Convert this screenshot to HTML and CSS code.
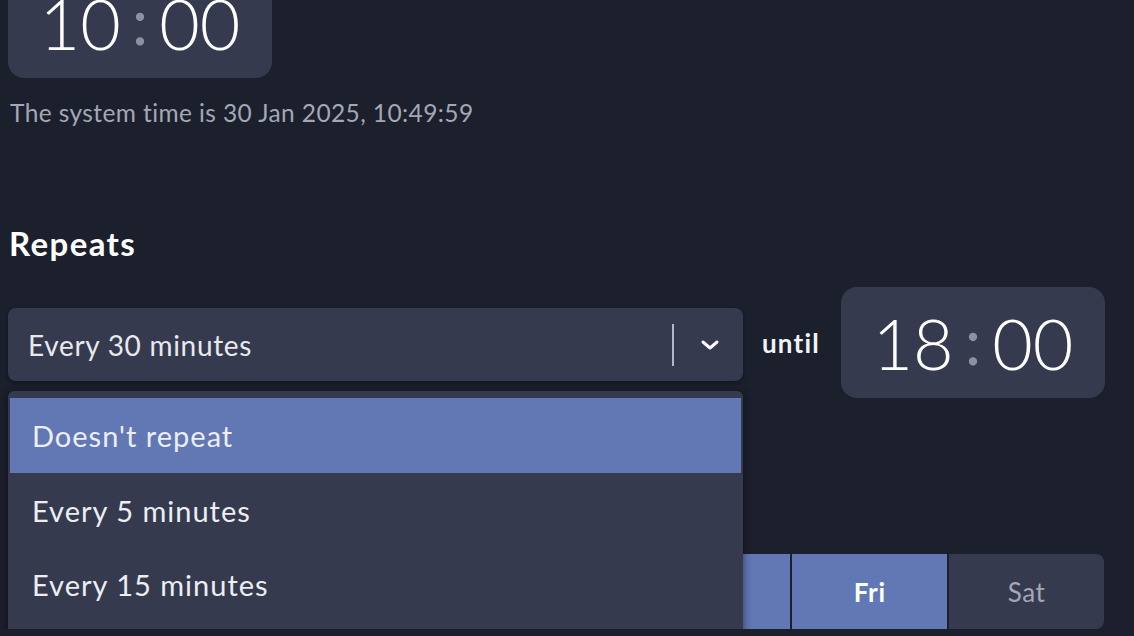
FILE: index.html
```html
<!DOCTYPE html>
<html lang="en">
<head>
    <meta charset="UTF-8">
    <meta name="viewport" content="width=device-width, initial-scale=1.0">
    <title>Schedule</title>
    <link rel="stylesheet" href="styles.css">
</head>
<body>
    <div class="page">
        <div class="time-box">
            <span class="digits">10</span><span class="colon">:</span><span class="digits">00</span>
        </div>
        <p class="system-time">The system time is 30 Jan 2025, 10:49:59</p>

        <h2 class="section-title">Repeats</h2>

        <div class="repeat-row">
            <div class="select-wrap">
                <div class="select">
                    <span class="select-value">Every 30 minutes</span>
                    <span class="select-sep"></span>
                    <svg class="chevron" width="22" height="14" viewBox="0 0 22 14">
                        <path d="M4 4 L11 10 L18 4" fill="none" stroke="#ffffff" stroke-width="3" stroke-linecap="round" stroke-linejoin="round"/>
                    </svg>
                </div>
                <ul class="menu">
                    <li class="menu-item active">Doesn't repeat</li>
                    <li class="menu-item">Every 5 minutes</li>
                    <li class="menu-item">Every 15 minutes</li>
                    <li class="menu-item">Every 30 minutes</li>
                </ul>
            </div>
            <span class="until">until</span>
            <div class="time-box">
                <span class="digits">18</span><span class="colon">:</span><span class="digits">00</span>
            </div>
        </div>

        <div class="days">
            <div class="day">Sun</div>
            <div class="day on">Mon</div>
            <div class="day on">Tue</div>
            <div class="day on">Wed</div>
            <div class="day on">Thu</div>
            <div class="day on">Fri</div>
            <div class="day">Sat</div>
        </div>
    </div>
</body>
</html>
```

FILE: styles.css
```css
body {
    margin: 0;
    padding: 0;
    background: #1c1f2c;
    color: #ffffff;
    font-family: 'Lato', 'Open Sans', sans-serif;
    overflow: hidden;
}

.page {
    display: flex;
    flex-direction: column;
    align-items: flex-start;
    padding: 0 30px 0 8px;
    margin-top: -33px;
}

.time-box {
    display: flex;
    align-items: center;
    justify-content: center;
    width: 264px;
    height: 111px;
    background: #363a4e;
    border-radius: 16px;
    box-sizing: border-box;
}

.digits {
    font-size: 70px;
    font-weight: 300;
    line-height: 1;
    color: #ffffff;
}

.colon {
    font-size: 66px;
    font-weight: 400;
    line-height: 1;
    color: #8e92a0;
    margin: 0 11px;
    position: relative;
    top: -3px;
}

.system-time {
    margin: 22px 0 0 2px;
    font-size: 24.5px;
    line-height: 26px;
    letter-spacing: 0.4px;
    color: #a3a7b6;
}

.section-title {
    margin: 100px 0 0 1px;
    font-size: 33px;
    line-height: 34px;
    letter-spacing: 1.4px;
    font-weight: 700;
}

.repeat-row {
    display: flex;
    align-items: center;
    margin-top: 27px;
}

.select-wrap {
    position: relative;
    width: 735px;
    margin-top: 4px;
}

.select {
    display: flex;
    align-items: center;
    height: 73px;
    padding: 0 22px 0 20px;
    background: #363a4e;
    border-radius: 8px;
    box-sizing: border-box;
    box-shadow: 0 2px 4px rgba(0, 0, 0, 0.3);
}

.select-value {
    flex: 1;
    font-size: 28px;
    letter-spacing: 0.7px;
    color: #e8e9ee;
}

.select-sep {
    width: 2px;
    height: 42px;
    background: #b5b8c4;
    margin-right: 25px;
}

.menu {
    position: absolute;
    top: calc(100% + 10px);
    left: 0;
    right: 0;
    margin: 0;
    padding: 7px 2px 0;
    list-style: none;
    background: #363a4e;
    border-radius: 6px 6px 0 0;
    box-shadow: 0 2px 8px rgba(0, 0, 0, 0.5);
    z-index: 5;
}

.menu-item {
    height: 74px;
    display: flex;
    align-items: center;
    padding-left: 22px;
    font-size: 29px;
    letter-spacing: 1px;
    color: #eceef3;
}

.menu-item.active {
    background: #6178b5;
    height: 75px;
}

.until {
    margin: 0 21px 0 19px;
    font-size: 26px;
    font-weight: 700;
    letter-spacing: 1.2px;
    color: #f2f3f6;
}

.days {
    display: flex;
    gap: 2px;
    width: 1096px;
    margin-top: 156px;
    border-radius: 8px;
    overflow: hidden;
}

.day {
    flex: 1;
    height: 75px;
    display: flex;
    align-items: center;
    justify-content: center;
    background: #363a4e;
    color: #a3a7b6;
    font-size: 26px;
    letter-spacing: 0.6px;
}

.day.on {
    background: #6178b5;
    color: #ffffff;
    font-weight: 700;
}
```
